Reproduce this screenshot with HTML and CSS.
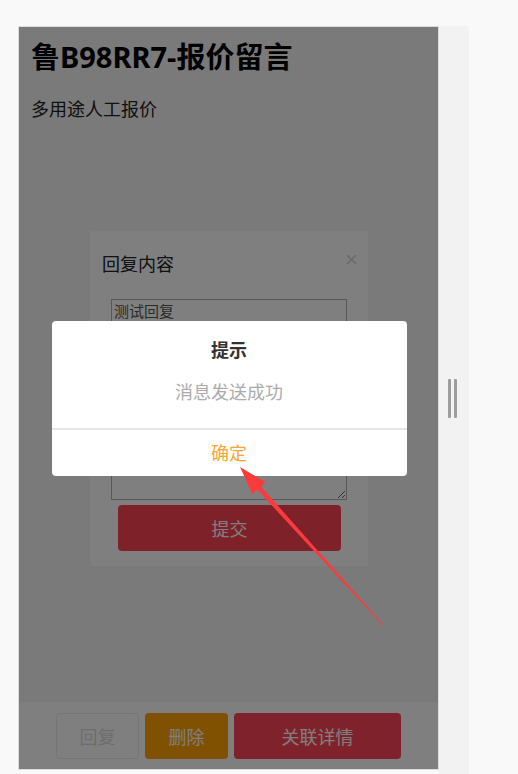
FILE: index.html
```html
<!DOCTYPE html>
<html lang="zh-CN">
<head>
<meta charset="utf-8">
<title>鲁B98RR7-报价留言</title>
<link rel="stylesheet" href="styles.css">
</head>
<body>
<div class="stage">
  <div class="device">
    <div class="page">
      <header class="head">
        <h1 class="title">鲁B98RR7-报价留言</h1>
        <p class="sub">多用途人工报价</p>
      </header>
      <div class="spacer"></div>
      <div class="bar">
        <button class="btn btn-reply">回复</button>
        <button class="btn btn-del">删除</button>
        <button class="btn btn-link">关联详情</button>
      </div>

      <div class="reply">
        <div class="reply-title">回复内容</div>
        <svg class="reply-close" viewBox="0 0 11 11" width="11" height="11"><path d="M1 1L10 10M10 1L1 10" stroke="#d4d4d4" stroke-width="1.6" fill="none"/></svg>
        <textarea class="reply-text">测试回复</textarea>
        <button class="submit">提交</button>
      </div>

      <div class="mask">
        <div class="dialog">
          <div class="dlg-title">提示</div>
          <div class="dlg-msg">消息发送成功</div>
          <div class="dlg-ok">确定</div>
        </div>
      </div>
    </div>
  </div>
  <div class="side">
    <span class="grip"></span><span class="grip"></span>
  </div>
</div>
<svg class="arrow" width="518" height="774" viewBox="0 0 518 774">
  <polygon fill="#fb3b3b" points="240,467 265.5,482 260.7,486.3 383.4,624.7 382.6,625.3 257.2,489.6 252.4,494.2"/>
</svg>
</body>
</html>
```
FILE: styles.css
```css
* { box-sizing: border-box; }
html, body { margin: 0; padding: 0; }
body {
  width: 518px;
  height: 774px;
  overflow: hidden;
  background: #f9f9f9;
  font-family: "Noto Sans", "Noto Sans CJK SC", sans-serif;
  position: relative;
}
.stage {
  display: flex;
  padding: 26px 0 0 18px;
  height: 774px;
}
.device {
  width: 421px;
  height: 744px;
  border: 1px solid #dcdcdc;
  flex: none;
}
.page {
  position: relative;
  height: 742px;
  background: #f4f4f4;
  display: flex;
  flex-direction: column;
}
.head { padding: 12px 12px 0; }
.title {
  margin: 0;
  font-size: 29px;
  line-height: 36px;
  font-weight: 700;
  color: #000;
}
.sub {
  margin: 22px 0 0;
  font-size: 18px;
  line-height: 24px;
  color: #222;
}
.spacer { flex: 1; }
.bar {
  height: 67px;
  background: #fff;
  display: flex;
  justify-content: center;
  gap: 6px;
  padding-top: 11px;
}
.btn {
  height: 46px;
  border-radius: 4px;
  font-family: inherit;
  font-size: 18px;
  border: 1px solid transparent;
  color: #fff;
  padding: 0;
}
.btn-reply { width: 83px; background: #fff; border-color: #eaeaea; color: #dadada; }
.btn-del { width: 83px; background: #ffa200; }
.btn-link { width: 167px; background: #ff4456; }

.reply {
  position: absolute;
  top: 204px;
  left: 71px;
  width: 278px;
  height: 335px;
  background: #fff;
  padding: 21px 21px 15px 12px;
  display: flex;
  flex-direction: column;
}
.reply-title {
  font-size: 18px;
  line-height: 24px;
  color: #222;
}
.reply-close {
  position: absolute;
  top: 23px;
  right: 11px;
}
.reply-text {
  margin: 23px 0 0 9px;
  width: 236px;
  height: 201px;
  border: 1px solid #b0b0b0;
  padding: 1px 2px;
  font-family: inherit;
  font-size: 15px;
  line-height: 20px;
  color: #555;
  background: #fff;
}
.submit {
  margin: 5px 0 0 16px;
  width: 223px;
  height: 46px;
  border: 0;
  border-radius: 4px;
  background: #fe4252;
  color: #fff;
  font-family: inherit;
  font-size: 18px;
}

.mask {
  position: absolute;
  inset: 0;
  background: rgba(0, 0, 0, 0.5);
  display: flex;
  align-items: center;
  justify-content: center;
}
.dialog {
  width: 355px;
  margin-left: 1px;
  background: #fff;
  border-radius: 4px;
  text-align: center;
}
.dlg-title {
  padding-top: 17px;
  font-size: 18px;
  line-height: 24px;
  font-weight: 700;
  color: #333;
}
.dlg-msg {
  margin-top: 18px;
  padding-bottom: 24px;
  font-size: 18px;
  line-height: 24px;
  color: #ababab;
  border-bottom: 2px solid #e6e6e6;
}
.dlg-ok {
  height: 46px;
  line-height: 46px;
  font-size: 18px;
  color: #f8a632;
}

.side {
  width: 30px;
  height: 748px;
  background: #f2f2f2;
  display: flex;
  align-items: center;
  gap: 3px;
  padding-left: 9px;
  padding-bottom: 4px;
}
.grip {
  width: 3px;
  height: 39px;
  background: #9c9c9c;
  border-radius: 1px;
}
.arrow {
  position: absolute;
  left: 0;
  top: 0;
  pointer-events: none;
}
```
